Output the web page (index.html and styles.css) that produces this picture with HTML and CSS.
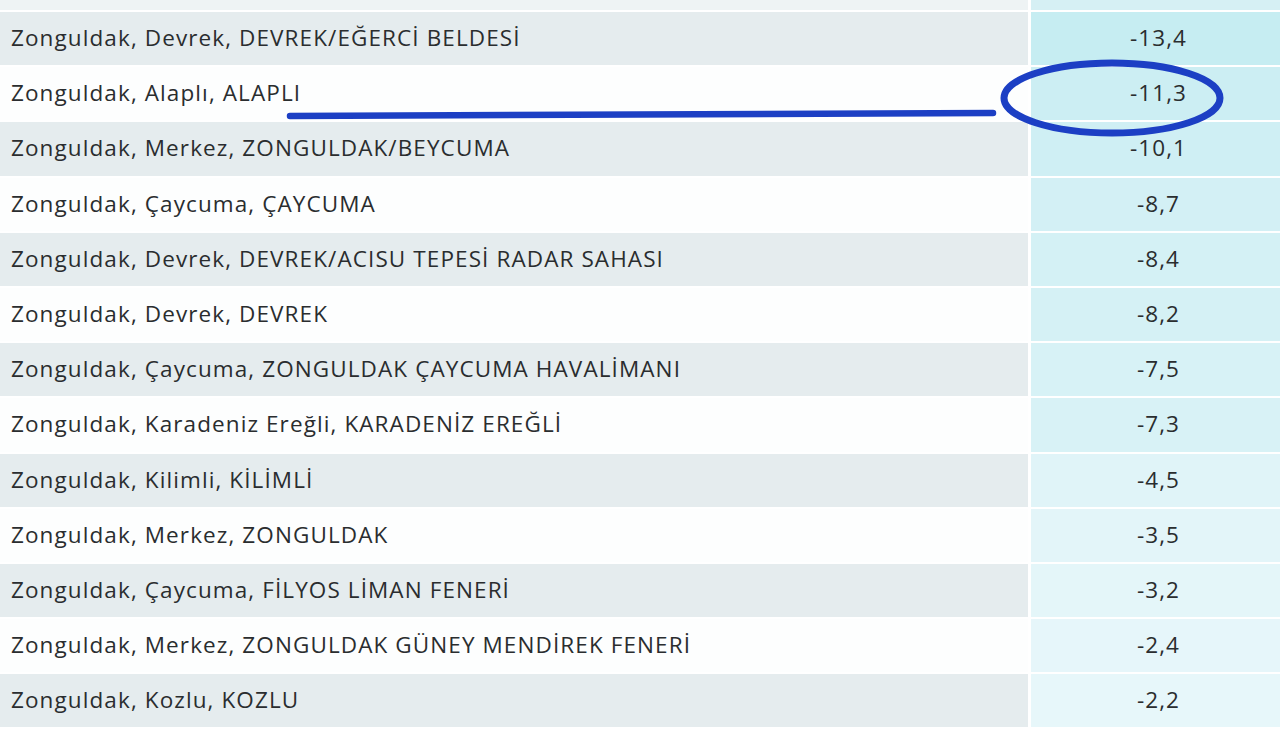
FILE: index.html
```html
<!DOCTYPE html>
<html lang="tr">
<head>
<meta charset="utf-8">
<title>Zonguldak sıcaklıkları</title>
<link rel="stylesheet" href="styles.css">
</head>
<body>
<div class="page">
  <div class="table">
    <div class="cell name stub"></div><div class="cell val stub" style="background:rgb(214,240,244)"></div>
    <div class="cell name odd">Zonguldak, Devrek, DEVREK/EĞERCİ BELDESİ</div><div class="cell val" style="background:rgb(198,237,242)">-13,4</div>
    <div class="cell name even">Zonguldak, Alaplı, ALAPLI</div><div class="cell val" style="background:rgb(204,238,243)">-11,3</div>
    <div class="cell name odd">Zonguldak, Merkez, ZONGULDAK/BEYCUMA</div><div class="cell val" style="background:rgb(207,239,244)">-10,1</div>
    <div class="cell name even">Zonguldak, Çaycuma, ÇAYCUMA</div><div class="cell val" style="background:rgb(211,240,245)">-8,7</div>
    <div class="cell name odd">Zonguldak, Devrek, DEVREK/ACISU TEPESİ RADAR SAHASI</div><div class="cell val" style="background:rgb(212,241,245)">-8,4</div>
    <div class="cell name even">Zonguldak, Devrek, DEVREK</div><div class="cell val" style="background:rgb(213,241,245)">-8,2</div>
    <div class="cell name odd">Zonguldak, Çaycuma, ZONGULDAK ÇAYCUMA HAVALİMANI</div><div class="cell val" style="background:rgb(215,242,246)">-7,5</div>
    <div class="cell name even">Zonguldak, Karadeniz Ereğli, KARADENİZ EREĞLİ</div><div class="cell val" style="background:rgb(216,242,246)">-7,3</div>
    <div class="cell name odd">Zonguldak, Kilimli, KİLİMLİ</div><div class="cell val" style="background:rgb(224,244,248)">-4,5</div>
    <div class="cell name even">Zonguldak, Merkez, ZONGULDAK</div><div class="cell val" style="background:rgb(227,245,249)">-3,5</div>
    <div class="cell name odd">Zonguldak, Çaycuma, FİLYOS LİMAN FENERİ</div><div class="cell val" style="background:rgb(228,246,249)">-3,2</div>
    <div class="cell name even">Zonguldak, Merkez, ZONGULDAK GÜNEY MENDİREK FENERİ</div><div class="cell val" style="background:rgb(230,246,250)">-2,4</div>
    <div class="cell name odd">Zonguldak, Kozlu, KOZLU</div><div class="cell val" style="background:rgb(231,247,250)">-2,2</div>
  </div>
  <svg class="marks" width="1280" height="729" viewBox="0 0 1280 729" aria-hidden="true">
    <path d="M290 116 L993 113" fill="none" stroke="#1c3fc4" stroke-width="6.5" stroke-linecap="round"/>
    <ellipse cx="1112" cy="98" rx="108" ry="35" fill="none" stroke="#1c3fc4" stroke-width="7"/>
  </svg>
</div>
</body>
</html>
```

FILE: styles.css
```css
html, body {
  margin: 0;
  padding: 0;
  background: #ffffff;
}
.page {
  position: relative;
  width: 1280px;
  height: 729px;
  overflow: hidden;
}
.table {
  display: grid;
  grid-template-columns: 1028px 1fr;
  grid-template-rows: 10px;
  grid-auto-rows: 53.2px;
  column-gap: 3px;
  row-gap: 2px;
  background: #ffffff;
  font-family: "Open Sans", "Noto Sans", sans-serif;
  font-size: 22.5px;
  letter-spacing: 1.1px;
  color: #2a2d2f;
}
.cell {
  display: flex;
  align-items: center;
  padding-bottom: 2px;
}
.name {
  padding-left: 11px;
}
.name.stub {
  background: #eef3f4;
}
.odd {
  background: #e5ecee;
}
.even {
  background: #fdfefe;
}
.val {
  justify-content: center;
  padding-left: 6px;
}
.stub {
  padding-bottom: 0;
}
.marks {
  position: absolute;
  left: 0;
  top: 0;
}
```
